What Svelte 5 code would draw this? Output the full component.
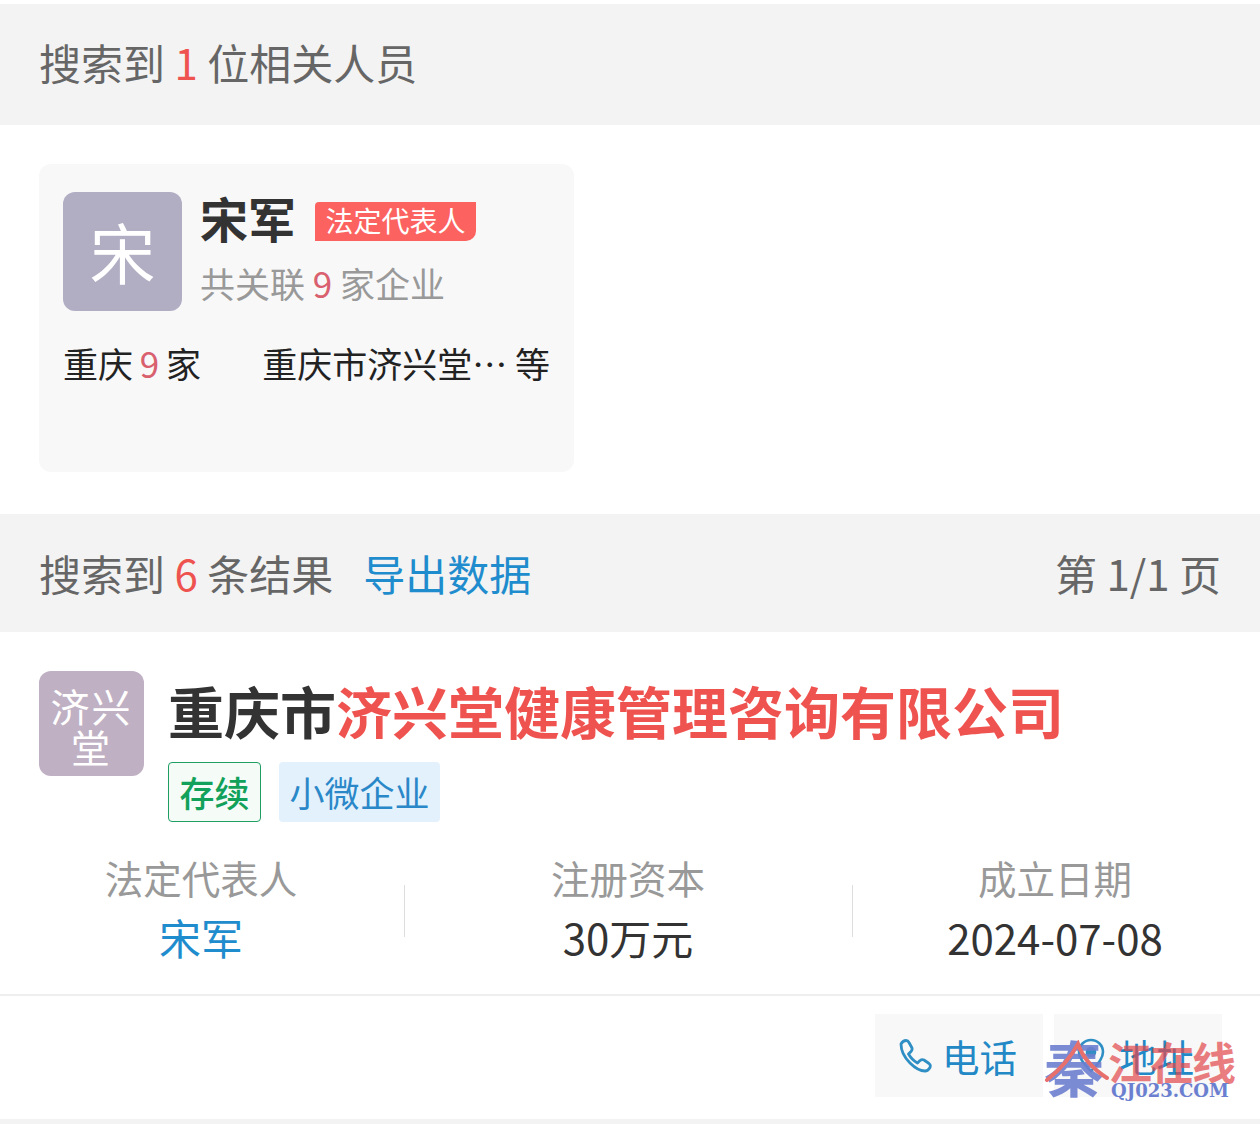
<script>
  const stats = [
    { label: '法定代表人', value: '宋军', link: true },
    { label: '注册资本', value: '30万元' },
    { label: '成立日期', value: '2024-07-08' }
  ];
</script>

<div class="page">
  <div class="bar first">
    <span>搜索到 <em>1</em> 位相关人员</span>
  </div>

  <div class="people">
    <div class="person">
      <div class="person-top">
        <div class="avatar">宋</div>
        <div class="person-info">
          <div class="name-row">
            <span class="name">宋军</span>
            <span class="role">法定代表人</span>
          </div>
          <div class="related">共关联 <em>9</em> 家企业</div>
        </div>
      </div>
      <div class="person-bottom">
        <span class="area">重庆 <em>9</em> 家</span>
        <span>重庆市济兴堂… 等</span>
      </div>
    </div>
  </div>

  <div class="bar second">
    <span>搜索到 <em>6</em> 条结果</span>
    <span class="export">导出数据</span>
    <span class="pager">第 1/1 页</span>
  </div>

  <div class="company">
    <div class="company-top">
      <div class="logo">济兴<br />堂</div>
      <div class="company-main">
        <div class="title">重庆市<em>济兴堂健康管理咨询有限公司</em></div>
        <div class="tags">
          <span class="tag green">存续</span>
          <span class="tag blue">小微企业</span>
        </div>
      </div>
    </div>
    <div class="stats">
      {#each stats as s}
        <div class="stat">
          <div class="label">{s.label}</div>
          <div class="value" class:link={s.link}>{s.value}</div>
        </div>
      {/each}
    </div>
    <div class="actions">
      <div class="action">
        <svg width="34" height="36" viewBox="0 0 34 36" fill="none" stroke="#2f8fc4" stroke-width="2.8" stroke-linejoin="round">
          <path d="M3 6 Q5 2.500 8 2.500 Q10 2.500 11 4.500 L14 10 Q14.500 12 13 13.500 L10.500 16 Q14 22 19.500 25 L22 22.500 Q24 21 26 22 L31 25.500 Q33 27 32 29.500 Q30 33 27 33 Q20 33 12 25 Q3 16 3 6 Z" />
        </svg>
        <span>电话</span>
      </div>
      <div class="action addr">
        <svg width="28" height="36" viewBox="0 0 28 36" fill="none" stroke="#2f8fc4" stroke-width="2.6">
          <path d="M14 33 Q2 22 2 14 A12 12 0 0 1 26 14 Q26 22 14 33 Z" />
          <circle cx="14" cy="14" r="4" fill="#2f8fc4" />
        </svg>
        <span>地址</span>
      </div>
    </div>
  </div>
  <div class="foot"></div>

  <div class="watermark">
    <span class="wm-qin">秦</span>
    <span class="wm-jiang">江在线</span>
    <span class="wm-url">QJ023.COM</span>
    <svg class="wm-swoosh" width="70" height="44" viewBox="0 0 70 44" fill="none" stroke="#e8706c" stroke-width="4" stroke-linecap="round">
      <path d="M4 40 Q24 24 35 4 Q42 24 64 38" />
    </svg>
  </div>
</div>

<style>
  :global(body) {
    margin: 0;
    background: #fff;
  }
  .page {
    position: relative;
    width: 1260px;
    height: 1124px;
    overflow: hidden;
    font-family: "Noto Sans CJK SC", "Noto Sans", sans-serif;
    color: #333;
  }
  em {
    font-style: normal;
    color: #ef5350;
  }

  .bar {
    display: flex;
    align-items: center;
    padding: 0 39px;
    background: #f3f3f3;
    color: #666;
    font-size: 42px;
    line-height: 60px;
  }
  .first {
    margin-top: 4px;
    height: 121px;
    padding-bottom: 6px;
    box-sizing: border-box;
  }
  .second {
    height: 118px;
    box-sizing: border-box;
  }
  .export {
    margin-left: 30px;
    color: #1f8ccd;
  }
  .pager {
    margin-left: auto;
  }

  .people {
    height: 389px;
    padding: 39px 0 0 39px;
    box-sizing: border-box;
  }
  .person {
    box-sizing: border-box;
    width: 535px;
    height: 308px;
    padding: 28px 24px;
    background: #f8f8f8;
    border-radius: 12px;
  }
  .person-top {
    display: flex;
    gap: 18px;
  }
  .avatar {
    width: 119px;
    height: 119px;
    border-radius: 12px;
    background: #b1aec3;
    color: #fff;
    font-size: 66px;
    line-height: 117px;
    text-align: center;
  }
  .name-row {
    display: flex;
    align-items: center;
    height: 60px;
  }
  .name {
    font-size: 48px;
    font-weight: 700;
    line-height: 60px;
    margin-top: -10px;
  }
  .role {
    margin-left: 19px;
    margin-top: -2px;
    width: 161px;
    height: 39px;
    border-radius: 4px 0 10px 0;
    background: #fb6260;
    color: #fff;
    font-size: 28px;
    line-height: 37px;
    text-align: center;
  }
  .related {
    margin-top: 6px;
    color: #999;
    font-size: 35px;
    line-height: 50px;
  }
  .related em,
  .person-bottom em {
    color: #d9606f;
  }
  .person-bottom {
    display: flex;
    justify-content: space-between;
    margin-top: 27px;
    color: #222;
    font-size: 35px;
    line-height: 50px;
  }
  .area {
    word-spacing: -1px;
  }

  .company-top {
    display: flex;
    padding: 39px 0 0 39px;
    gap: 24px;
  }
  .logo {
    flex: none;
    width: 105px;
    height: 105px;
    border-radius: 12px;
    background: #bfb0c3;
    color: #fff;
    font-size: 39px;
    letter-spacing: 2px;
    line-height: 41px;
    text-align: center;
    padding-top: 14px;
    box-sizing: border-box;
  }
  .title {
    font-size: 56px;
    font-weight: 700;
    line-height: 84px;
    white-space: nowrap;
    margin-top: -3px;
  }
  .tags {
    display: flex;
    gap: 18px;
    margin: 10px 0 0 0;
  }
  .tag {
    box-sizing: border-box;
    height: 60px;
    border-radius: 4px;
    font-size: 35px;
    line-height: 58px;
    text-align: center;
  }
  .green {
    width: 93px;
    border: 1px solid #1f9d63;
    background: #f5fcf8;
    color: #12a15a;
    font-weight: 500;
  }
  .blue {
    width: 161px;
    background: #e3f1fd;
    color: #2b88c8;
    line-height: 60px;
  }

  .stats {
    display: grid;
    grid-template-columns: 405px 448px 1fr;
    margin-top: 26px;
    padding-bottom: 27px;
    border-bottom: 2px solid #eeeeee;
  }
  .stat {
    position: relative;
    text-align: center;
  }
  .stat:nth-child(1) {
    padding-right: 3px;
  }
  .stat:nth-child(2) {
    padding-right: 2px;
  }
  .stat:nth-child(3) {
    padding-right: 3px;
  }
  .stat:not(:last-child)::after {
    content: "";
    position: absolute;
    right: 0;
    top: 37px;
    height: 52px;
    width: 1px;
    background: #dddddd;
  }
  .label {
    color: #999;
    font-size: 38.500px;
    line-height: 59px;
  }
  .value {
    color: #333;
    font-size: 42px;
    line-height: 60px;
  }
  .link {
    color: #1f8ccd;
  }

  .actions {
    display: flex;
    justify-content: flex-end;
    gap: 11px;
    padding: 18px 38px 22px 0;
  }
  .action {
    display: flex;
    align-items: center;
    gap: 10px;
    box-sizing: border-box;
    width: 168px;
    height: 83px;
    padding-left: 23px;
    background: #f8f8f8;
    color: #2388c6;
    font-size: 37.500px;
  }
  .addr {
    gap: 14px;
  }
  .foot {
    height: 5px;
    background: #f3f3f3;
  }

  .watermark {
    position: absolute;
    left: 1040px;
    top: 1034px;
    width: 200px;
    height: 72px;
  }
  .wm-qin {
    position: absolute;
    left: 4px;
    top: -4px;
    color: #6d7fd0;
    font-size: 60px;
    font-weight: 700;
    line-height: 72px;
    opacity: 0.9;
  }
  .wm-jiang {
    position: absolute;
    left: 68px;
    top: 1px;
    color: #e2474a;
    font-size: 44px;
    font-weight: 700;
    line-height: 52px;
    letter-spacing: -2px;
    white-space: nowrap;
    opacity: 0.7;
  }
  .wm-url {
    position: absolute;
    left: 71px;
    top: 45px;
    color: #6b7fd0;
    font-family: "DejaVu Serif", serif;
    font-size: 18px;
    font-weight: 700;
    line-height: 24px;
    white-space: nowrap;
  }
  .wm-swoosh {
    position: absolute;
    left: 3px;
    top: 6px;
  }
</style>
